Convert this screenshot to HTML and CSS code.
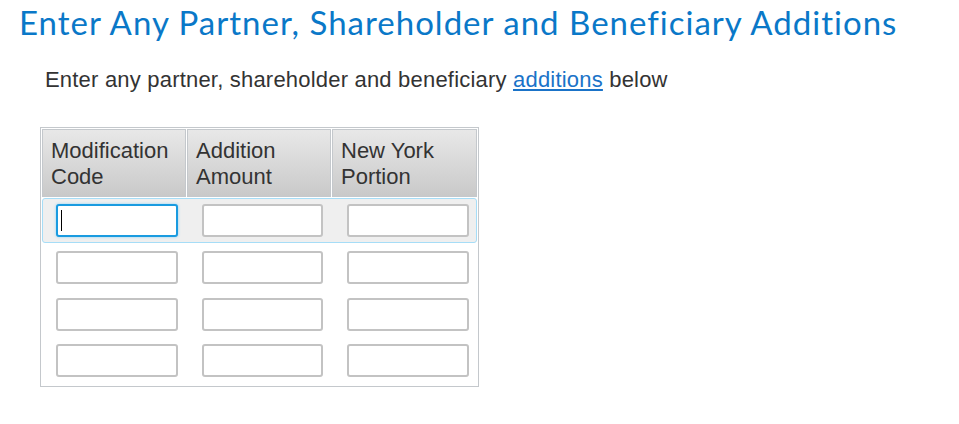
FILE: index.html
```html
<!DOCTYPE html>
<html>
<head>
<meta charset="utf-8">
<link rel="stylesheet" href="styles.css">
</head>
<body>
<div class="page">
  <h1 class="title">Enter Any Partner, Shareholder and Beneficiary Additions</h1>
  <p class="intro">Enter any partner, shareholder and beneficiary <a href="#" class="link">additions</a> below</p>
  <div class="grid">
    <div class="head">
      <div class="th c1">Modification<br>Code</div>
      <div class="th c2">Addition<br>Amount</div>
      <div class="th c3">New York<br>Portion</div>
    </div>
    <div class="row active">
      <span class="focus-wrap">
        <input class="field w1 focused" type="text">
        <span class="caret"></span>
      </span>
      <input class="field w2" type="text">
      <input class="field w3" type="text">
    </div>
    <div class="rest">
      <div class="row">
        <input class="field w1" type="text">
        <input class="field w2" type="text">
        <input class="field w3" type="text">
      </div>
      <div class="row r3">
        <input class="field w1" type="text">
        <input class="field w2" type="text">
        <input class="field w3" type="text">
      </div>
      <div class="row r4">
        <input class="field w1" type="text">
        <input class="field w2" type="text">
        <input class="field w3" type="text">
      </div>
    </div>
  </div>
</div>
</body>
</html>
```
FILE: styles.css
```css
html, body {
  margin: 0;
  padding: 0;
  background: #ffffff;
}
.page {
  padding: 0 0 0 19px;
}
.title {
  margin: 0;
  padding-top: 2px;
  font-family: Lato, "Noto Sans", sans-serif;
  font-weight: 400;
  font-size: 33px;
  letter-spacing: 1px;
  line-height: 40px;
  color: #0a78c8;
}
.intro {
  margin: 24px 0 0 26px;
  font-family: "Liberation Sans", Arial, sans-serif;
  font-size: 22px;
  letter-spacing: 0.2px;
  line-height: 28px;
  color: #333333;
}
.link {
  color: #1a73c8;
  text-decoration: underline;
}
.grid {
  display: flex;
  flex-direction: column;
  width: 435px;
  margin: 33px 0 0 21px;
  padding: 1px;
  border: 1px solid #c4c8cc;
  font-family: "Liberation Sans", Arial, sans-serif;
}
.head {
  display: flex;
  gap: 1px;
}
.th {
  box-sizing: border-box;
  height: 68px;
  padding: 8px 8px 0 8px;
  font-size: 22px;
  line-height: 26px;
  color: #333333;
  border: 1px solid #c4c8cc;
  background: linear-gradient(#e8e8e8, #c9c9c9);
}
.c1, .c2 {
  width: 144px;
}
.c3 {
  width: 145px;
}
.row {
  display: flex;
  gap: 24px;
  padding-left: 14px;
}
.row.active {
  margin-top: 1px;
  padding: 5px 0 5px 13px;
  border: 1px solid #a6ddf7;
  border-radius: 3px;
  background: #efefef;
}
.rest {
  display: flex;
  flex-direction: column;
  padding: 8px 0 8px 0;
}
.r3 {
  margin-top: 14px;
}
.r4 {
  margin-top: 13px;
}
.focus-wrap {
  position: relative;
  display: block;
}
.caret {
  position: absolute;
  left: 5px;
  top: 6px;
  width: 1px;
  height: 21px;
  background: #000000;
}
.field {
  display: block;
  box-sizing: border-box;
  height: 33px;
  margin: 0;
  padding: 0 4px;
  border: 2px solid #c3c3c3;
  border-radius: 3px;
  background: #ffffff;
  font-family: "Liberation Sans", Arial, sans-serif;
  font-size: 20px;
  outline: none;
}
.w1, .w3 {
  width: 122px;
}
.w2 {
  width: 121px;
}
.field.focused {
  border-color: #1a9be0;
  box-shadow: 0 0 3px #8fd3f7;
}
```
